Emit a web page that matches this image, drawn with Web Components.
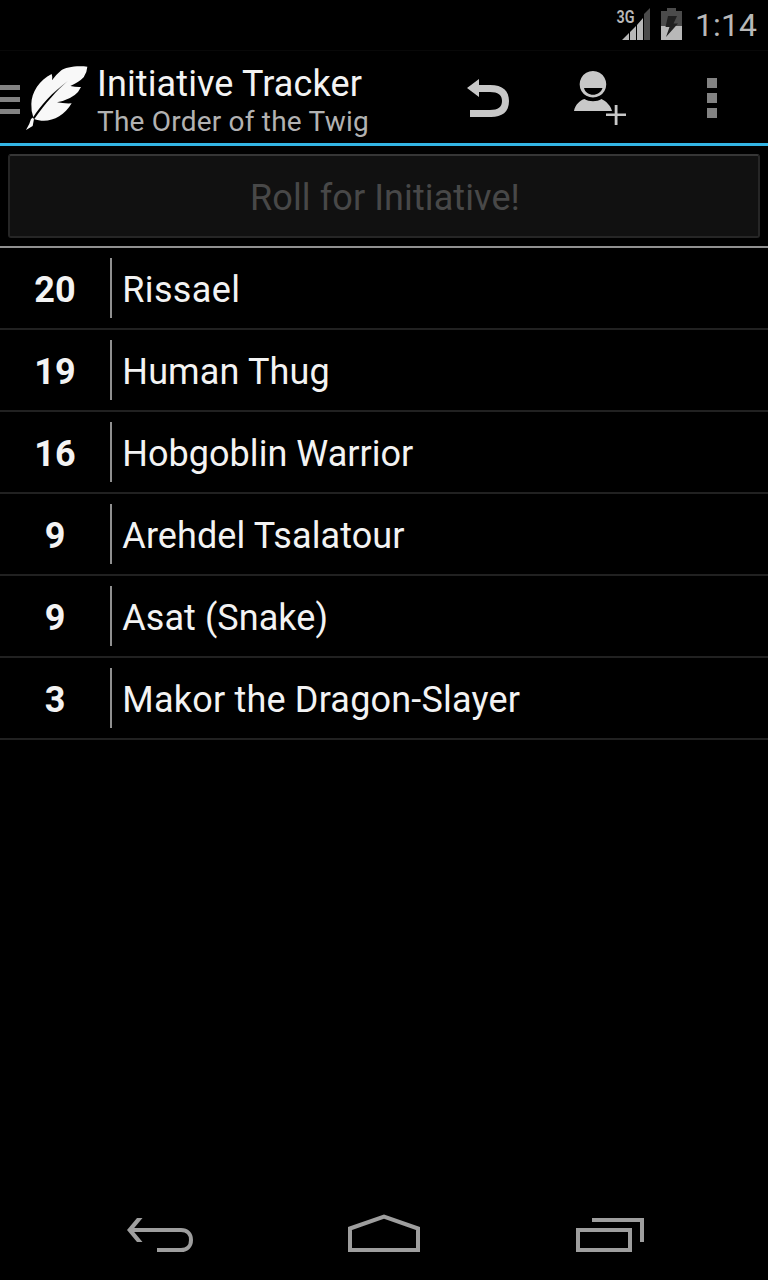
<!DOCTYPE html>
<html lang="en">
<head>
<meta charset="utf-8">
<title>Initiative Tracker</title>
<style>
html,body{margin:0;height:100%;background:#000;overflow:hidden}
body{font-family:Roboto,"Noto Sans",sans-serif}
</style>
</head>
<body>
<tracker-screen></tracker-screen>
<script>
function define(name, html) {
  const t = document.createElement('template');
  t.innerHTML = html;
  customElements.define(name, class extends HTMLElement {
    constructor() {
      super();
      this.attachShadow({mode: 'open'}).appendChild(t.content.cloneNode(true));
    }
  });
}

define('status-bar', `
<style>
:host{display:flex;height:50px;box-sizing:border-box;justify-content:flex-end;padding-right:12px;color:#b8b8b8}
svg{display:block}
.net{width:36px;height:50px;margin-right:8px}
.time{width:61px;margin-left:13px;font-size:32px;line-height:51px;font-weight:400;white-space:nowrap;letter-spacing:.1px}
</style>
<svg class="net" viewBox="616 0 36 50">
<path d="M650 8V40H644V14Z" fill="#4b4b4b"/>
<path d="M622 40L629 33V40ZM630 40V32L636 26V40ZM637 40V25L643 18V40Z" fill="#b8b8b8"/>
<text x="616.500" y="23" fill="#b8b8b8" font-family="Roboto,sans-serif" font-weight="600" font-size="18" textLength="18" lengthAdjust="spacingAndGlyphs">3G</text>
</svg>
<svg width="22" height="50" viewBox="660 0 22 50">
<path d="M661 11H667V8H676V11H682V26H661Z" fill="#4b4b4b"/><path d="M661 26H682V40H661Z" fill="#b8b8b8"/>
<path d="M668 16H677L673.500 23.500H678L666 37L669.500 27H665.500Z" fill="#202020"/>
</svg>
<div class="time"><slot></slot></div>`);

define('action-bar', `
<style>
:host{display:flex;height:96px;box-sizing:border-box;border-top:1px solid #080808;border-bottom:3px solid #33b5e5;align-items:flex-start}
svg{display:block;flex:none}
.drawer{margin-top:34px;margin-right:4px}
.logo{margin-top:13px}
.titles{width:360px;margin-left:7px;padding-top:11px;white-space:nowrap}
.title{font-size:36px;line-height:44px;color:#f3f3f3;letter-spacing:.12px}
.sub{font-size:28px;line-height:32px;color:#b2b2b2;letter-spacing:.21px}
</style>
<svg class="drawer" width="20" height="30" viewBox="0 0 20 30" fill="#838383"><path d="M0 0H20V5H0ZM0 12H20V17H0ZM0 24H20V29H0Z"/></svg>
<svg class="logo" width="66" height="68" viewBox="72 42 198 204">
<defs><linearGradient id="q" x1="100" y1="205" x2="203" y2="93" gradientUnits="userSpaceOnUse"><stop offset=".6" stop-color="#000"/><stop offset="1" stop-color="#aaa"/></linearGradient></defs>
<path fill="#f8f8f8" d="M262 50C229 46 195 52 184 61Q169 73 156 91Q158 80 155 72C119 89 94 128 94 162Q93 184 100 202L93 207L88 221L78 240L98 228L102 207C142 222 189 205 215 160Q191 161 171 157Q215 148 234 126L243 111Q229 112 211 108Q238 96 251 82Q261 68 262 50Z"/>
<path fill="url(#q)" d="M98 204C122 166 157 127 204 92C170 123 136 158 103 207Z"/>
</svg>
<div class="titles"><div class="title"><slot name="title"></slot></div><div class="sub"><slot name="subtitle"></slot></div></div>
<svg style="margin-left:-17px" width="328" height="92" viewBox="440 51 328 92" fill="#c8c8c8">
<path d="M467 88L479 79V85H490C503 85 509 91 509 101C509 112 502 117 491 117H470V110H490C498 110 502 107 502 101C502 95 498 92 490 92H479V97Z"/>
<path fill-rule="evenodd" d="M593 71A13.300 13.300 0 1 1 592.900 71ZM584 88C586 97 600 97 602.500 88Z"/>
<path d="M574 111C575 105 580 100 584.500 99C589 102 597 102 601.500 99C606 101 611 106 612 111Z"/>
<path d="M614.700 105H617.500V113.500H626V116H617.500V125H614.700V116H606V113.500H614.700Z"/>
<path fill="#838383" d="M707 78H717V88H707ZM707 93H717V103H707ZM707 108H717V118H707Z"/>
</svg>`);

define('roll-button', `
<style>
:host{display:block;padding:8px 8px;border-bottom:2px solid #909090}
button{display:block;width:100%;height:84px;padding:3px 0 0 2px;box-sizing:border-box;background:#111;border:2px solid #262626;border-top-color:#363636;border-radius:3px;font:36px/78px Roboto,sans-serif;letter-spacing:.1px;color:#484848;text-align:center}
</style>
<button disabled><slot></slot></button>`);

define('initiative-row', `
<style>
:host{display:flex;height:82px;box-sizing:border-box;border-bottom:2px solid #212121;align-items:center;font-size:36px;line-height:60px;color:#f3f3f3}
.score{width:110px;height:60px;text-align:center;font-weight:700;padding-top:2px;box-sizing:border-box}
.name{flex:1;height:60px;border-left:2px solid #909090;padding:2px 0 0 10.300px;box-sizing:border-box;white-space:nowrap;letter-spacing:var(--track,0)}
</style>
<div class="score"><slot name="score"></slot></div><div class="name"><slot></slot></div>`);

define('nav-bar', `
<style>
:host{display:flex;height:96px;justify-content:space-between;padding:0 122px}
svg{display:block}
</style>
<svg width="76" height="96" viewBox="122 1184 76 96" fill="none" stroke="#9e9e9e" stroke-width="4"><path d="M131 1230H181C187 1230 191 1234 191 1240C191 1246 187 1250 181 1250H157"/><path d="M137 1218H142.500L132.500 1230L142.500 1242H137L127 1230Z" fill="#9e9e9e" stroke="none"/></svg>
<svg width="76" height="96" viewBox="346 1184 76 96" fill="none" stroke="#9e9e9e" stroke-width="4"><path d="M350 1228.500L384 1216.500L418 1228.500V1250H350Z"/></svg>
<svg width="76" height="96" viewBox="570 1184 76 96" fill="none" stroke="#9e9e9e" stroke-width="4"><path d="M578 1230H630V1250H578ZM592 1220H642V1242"/></svg>`);

define('tracker-screen', `
<style>
:host{display:flex;flex-direction:column;width:768px;height:1280px;background:#000}
main{flex:1}
</style>
<status-bar>1:14</status-bar>
<action-bar><span slot="title">Initiative Tracker</span><span slot="subtitle">The Order of the Twig</span></action-bar>
<main>
<roll-button>Roll for Initiative!</roll-button>
<initiative-row style="--track:.35px"><span slot="score">20</span>Rissael</initiative-row>
<initiative-row style="--track:.15px"><span slot="score">19</span>Human Thug</initiative-row>
<initiative-row style="--track:.03px"><span slot="score">16</span>Hobgoblin Warrior</initiative-row>
<initiative-row style="--track:.1px"><span slot="score">9</span>Arehdel Tsalatour</initiative-row>
<initiative-row style="--track:.06px"><span slot="score">9</span>Asat (Snake)</initiative-row>
<initiative-row style="--track:.2px"><span slot="score">3</span>Makor the Dragon-Slayer</initiative-row>
</main>
<nav-bar></nav-bar>`);
</script>
</body>
</html>
